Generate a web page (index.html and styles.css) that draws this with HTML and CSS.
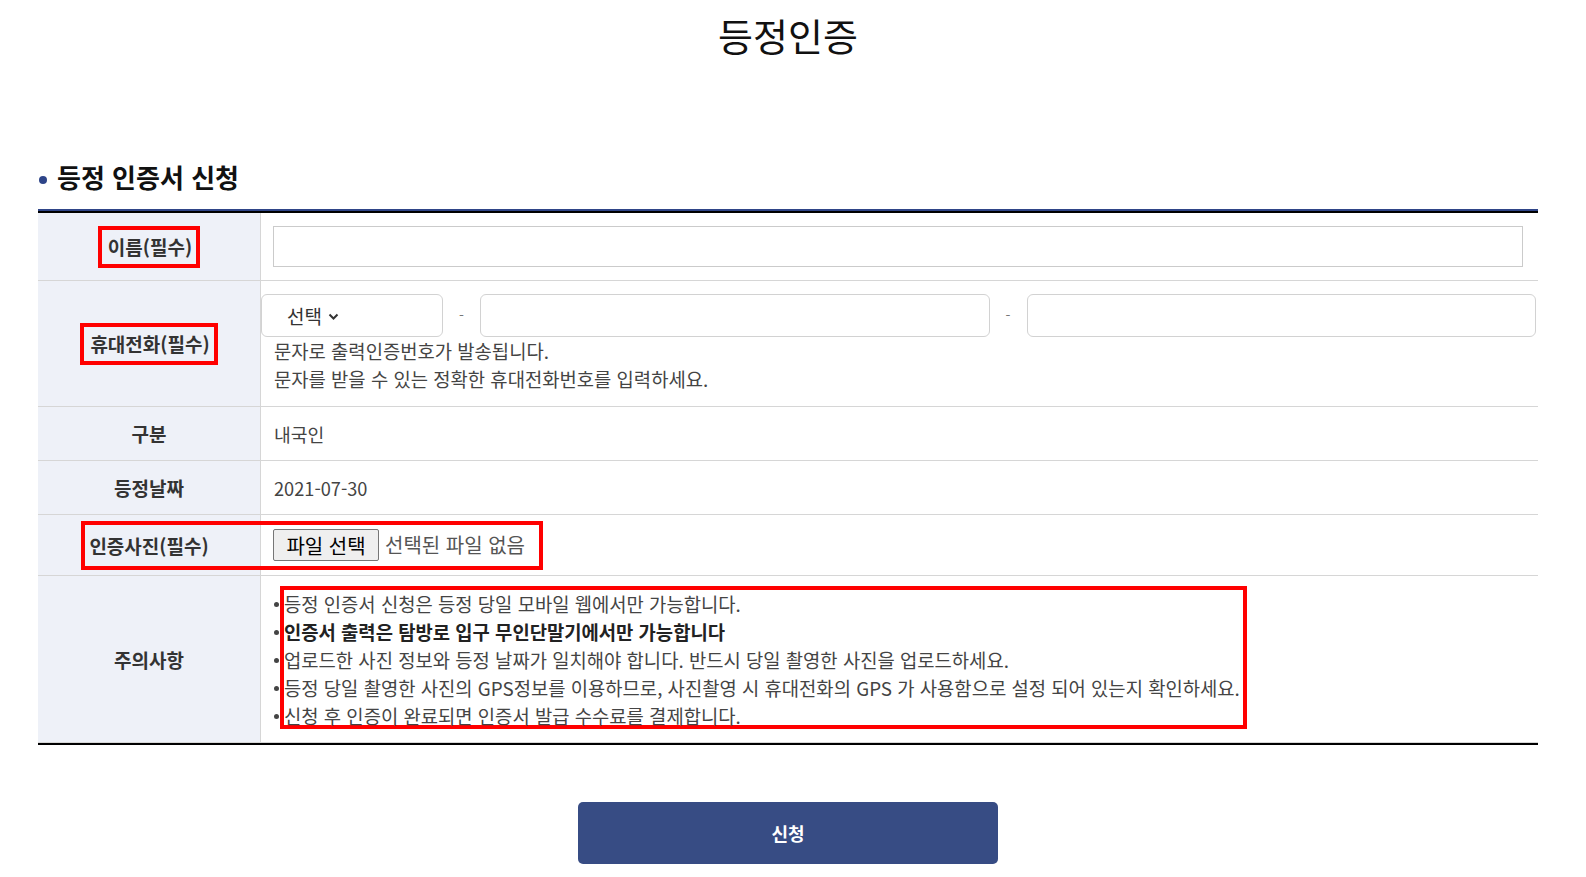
FILE: index.html
```html
<!DOCTYPE html>
<html lang="ko">
<head>
<meta charset="utf-8">
<title>등정인증</title>
<link rel="stylesheet" href="styles.css">
</head>
<body>
<div class="page">
  <h1 class="title">등정인증</h1>
  <h2 class="section-title"><span class="dot"></span>등정 인증서 신청</h2>
  <div class="form">
    <div class="row row-name">
      <div class="label"><span class="req">이름(필수)</span></div>
      <div class="cell"><input class="text-input" type="text"></div>
    </div>
    <div class="row row-phone">
      <div class="label"><span class="req">휴대전화(필수)</span></div>
      <div class="cell">
        <div class="phone-line">
          <div class="select">선택<svg class="chev" width="11" height="8" viewBox="0 0 11 8"><polyline points="1.5,1.5 5.5,5.5 9.5,1.5" fill="none" stroke="#333" stroke-width="2"/></svg></div>
          <span class="dash">-</span>
          <input class="phone-input" type="text">
          <span class="dash">-</span>
          <input class="phone-input" type="text">
        </div>
        <p class="help">문자로 출력인증번호가 발송됩니다.<br>문자를 받을 수 있는 정확한 휴대전화번호를 입력하세요.</p>
      </div>
    </div>
    <div class="row row-plain">
      <div class="label">구분</div>
      <div class="cell">내국인</div>
    </div>
    <div class="row row-plain">
      <div class="label">등정날짜</div>
      <div class="cell">2021-07-30</div>
    </div>
    <div class="row row-file">
      <div class="label">인증사진(필수)</div>
      <div class="cell"><button class="file-btn" type="button">파일 선택</button><span class="file-name">선택된 파일 없음</span></div>
      <div class="file-box"></div>
    </div>
    <div class="row row-notes">
      <div class="label">주의사항</div>
      <div class="cell">
        <ul class="notes">
          <li>등정 인증서 신청은 등정 당일 모바일 웹에서만 가능합니다.</li>
          <li class="strong">인증서 출력은 탐방로 입구 무인단말기에서만 가능합니다</li>
          <li>업로드한 사진 정보와 등정 날짜가 일치해야 합니다. 반드시 당일 촬영한 사진을 업로드하세요.</li>
          <li>등정 당일 촬영한 사진의 GPS정보를 이용하므로, 사진촬영 시 휴대전화의 GPS 가 사용함으로 설정 되어 있는지 확인하세요.</li>
          <li>신청 후 인증이 완료되면 인증서 발급 수수료를 결제합니다.</li>
        </ul>
      </div>
    </div>
  </div>
  <div class="actions"><button class="submit" type="button">신청</button></div>
</div>
</body>
</html>
```

FILE: styles.css
```css
body {
  margin: 0;
  font-family: "Noto Sans CJK KR", "Noto Sans", sans-serif;
  color: #333;
  background: #fff;
}
.page {
  width: 1500px;
  margin-left: 38px;
}
.title {
  margin: 16px 0 0;
  font-size: 38px;
  line-height: 38px;
  font-weight: 400;
  text-align: center;
  color: #111;
}
.section-title {
  margin: 110px 0 19px;
  display: flex;
  align-items: center;
  gap: 10px;
  font-size: 26px;
  line-height: 26px;
  font-weight: 700;
  color: #111;
}
.dot {
  width: 8px;
  height: 8px;
  margin: 6px 0 0 1px;
  border-radius: 50%;
  background: #2e4589;
}
.form {
  border-top: 2px solid #2f4588;
  border-bottom: 2px solid #000;
}
.row {
  display: grid;
  grid-template-columns: 223px 1fr;
  border-bottom: 1px solid #d6d6d6;
  position: relative;
}
.row-name {
  border-top: 2px solid #000;
}
.label {
  background: #eef1f8;
  border-right: 1px solid #d6d6d6;
  display: flex;
  align-items: center;
  justify-content: center;
  font-size: 19px;
  font-weight: 700;
  color: #333;
}
.req {
  display: inline-block;
  border: 4px solid #f00;
  padding: 3px 4px 3px 6px;
  line-height: 28px;
}
.cell {
  display: flex;
  align-items: center;
  font-size: 18.2px;
  line-height: 28px;
  color: #444;
  padding-left: 13px;
}
.row-name .cell {
  padding: 13px 15px 13px 12px;
}
.text-input {
  width: 100%;
  height: 41px;
  box-sizing: border-box;
  border: 1px solid #cbcbcb;
  margin: 0;
}
.row-phone .cell {
  display: block;
  padding: 13px 2px 13px 0;
}
.phone-line {
  display: flex;
  height: 43px;
}
.select {
  width: 182px;
  box-sizing: border-box;
  border: 1px solid #d2d2d2;
  border-radius: 6px;
  display: flex;
  align-items: center;
  gap: 6px;
  padding-left: 25px;
  color: #333;
  font-size: 19px;
}
.chev {
  margin-top: 2px;
}
.dash {
  width: 37px;
  text-align: center;
  color: #777;
  line-height: 43px;
  font-size: 14px;
}
.phone-input {
  flex: 1;
  min-width: 0;
  margin: 0;
  box-sizing: border-box;
  border: 1px solid #d2d2d2;
  border-radius: 6px;
}
.help {
  margin: 0;
  padding-left: 13px;
  line-height: 28px;
  font-size: 18.8px;
}
.row-plain .cell {
  min-height: 53px;
}
.row-file .cell {
  height: 60px;
  padding-left: 12px;
}
.file-btn {
  width: 106px;
  height: 32px;
  padding: 0;
  margin: 0;
  font-family: "Noto Sans CJK KR", "Noto Sans", sans-serif;
  font-size: 20px;
  color: #000;
  background: #efefef;
  border: 1px solid #767676;
  border-radius: 2px;
}
.file-name {
  margin-left: 6px;
  font-size: 20px;
  color: #555;
}
.file-box {
  position: absolute;
  left: 43px;
  top: 6px;
  width: 462px;
  height: 49px;
  box-sizing: border-box;
  border: 4px solid #f00;
  pointer-events: none;
}
.row-notes .cell {
  display: block;
  padding: 10px 0 13px 19px;
}
.notes {
  margin: 0;
  padding: 0 3px 0 0;
  list-style: none;
  border: 4px solid #f00;
  height: 135px;
  width: fit-content;
  font-size: 18.8px;
}
.notes li {
  position: relative;
  line-height: 28px;
}
.notes li::before {
  content: "";
  position: absolute;
  left: -10px;
  top: 12px;
  width: 5px;
  height: 5px;
  border-radius: 50%;
  background: #444;
}
.notes .strong {
  font-weight: 700;
  color: #222;
}
.actions {
  display: flex;
  justify-content: center;
  padding-top: 57px;
}
.submit {
  width: 420px;
  height: 62px;
  background: #374c84;
  border: 0;
  border-radius: 5px;
  color: #fff;
  font-family: "Noto Sans CJK KR", "Noto Sans", sans-serif;
  font-size: 18px;
  font-weight: 700;
}
```
